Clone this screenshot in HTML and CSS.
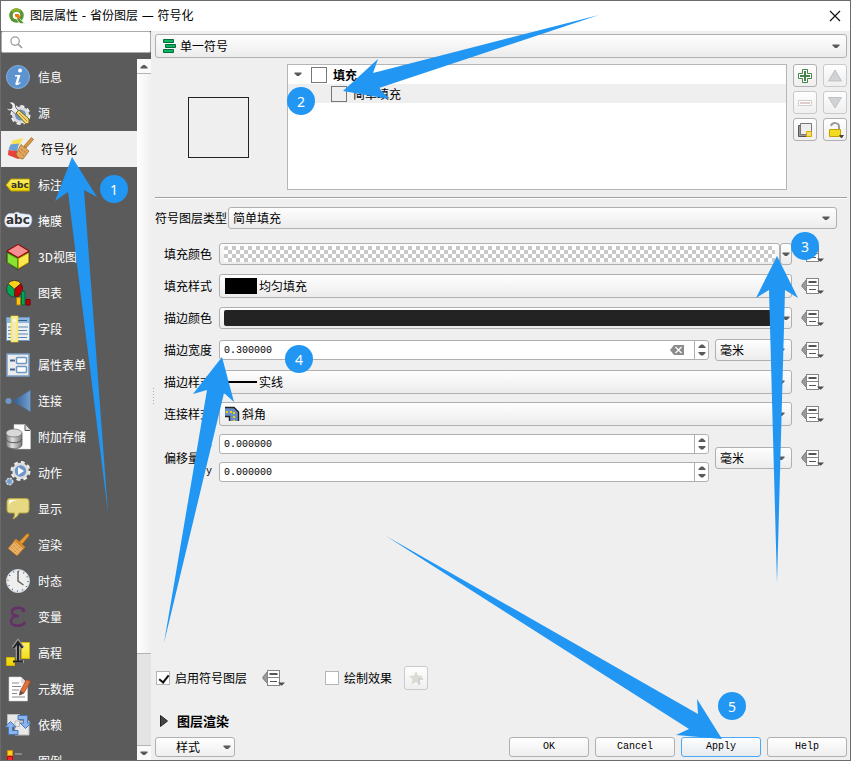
FILE: index.html
```html
<!DOCTYPE html>
<html lang="zh-CN">
<head>
<meta charset="utf-8">
<title>图层属性 - 省份图层 — 符号化</title>
<link rel="stylesheet" href="styles.css">
</head>
<body>
<svg class="defs" aria-hidden="true">
  <symbol id="caret" viewBox="0 0 8 5"><path d="M.5.500h7v1L5 4H3L.5 1.500z" fill="#5a5a5a"/></symbol>
  <symbol id="override" viewBox="0 0 24 18">
    <path d="M6 2v13L1 9.500V8z" fill="#999" stroke="#777"/>
    <rect x="5.500" y="1.500" width="12" height="15" fill="#fff" stroke="#858585"/>
    <path d="M5.500 8.500h12" stroke="#858585"/>
    <path d="M7.500 5h8" stroke="#555" stroke-width="2"/>
    <path d="M8 12.500h7" stroke="#555"/>
    <path d="M16 13.500h7l-3 3h-1z" fill="#4d4d4d"/>
  </symbol>
  <linearGradient id="grey" x1="0" x2="1"><stop offset="0" stop-color="#777"/><stop offset=".4" stop-color="#e0e0e0"/><stop offset="1" stop-color="#777"/></linearGradient>
  <linearGradient id="blue" x1="0" x2="1"><stop offset="0" stop-color="#2d5a90"/><stop offset="1" stop-color="#74a0cf"/></linearGradient>
  <linearGradient id="yellow" x1="0" x2="0" y1="0" y2="1"><stop offset="0" stop-color="#fdf06a"/><stop offset="1" stop-color="#edd400"/></linearGradient>
</svg>

<header class="titlebar">
  <svg class="logo" viewBox="0 0 16 16"><circle cx="7.500" cy="7.500" r="5.500" fill="none" stroke="#589632" stroke-width="3.500"/><path d="M3 3.500a6 6 0 0 1 8-.5" stroke="#93b023" stroke-width="2.500" fill="none"/><path d="M8 8l7.500 7.500h-4.200L8 12z" fill="#589632" stroke="#fff" stroke-width=".6"/><path d="M6 6h3.500L11 8v3L6 8.500z" fill="#ee7913"/></svg>
  <h1>图层属性 - 省份图层 — 符号化</h1>
  <button class="close" aria-label="关闭"><svg viewBox="0 0 12 12"><path d="M1 1l10 10M11 1L1 11" stroke="#111" stroke-width="1.200"/></svg></button>
</header>

<div class="window">
  <aside class="sidebar">
    <label class="search">
      <svg viewBox="0 0 14 14"><circle cx="5.500" cy="5.500" r="4.500" fill="none" stroke="#999" stroke-width="1.300"/><path d="M9 9l4 4" stroke="#999" stroke-width="1.600"/></svg>
      <input type="search" aria-label="搜索">
    </label>
    <div class="side-body">
      <nav class="pages">
        <button><svg viewBox="0 0 24 24"><circle cx="12" cy="12" r="11.500" fill="#5d93cf" stroke="#86aedb"/><circle cx="14" cy="5.500" r="2" fill="#fff"/><path d="M9 10h5.500l-2.500 8 2.500-1v1c-2 2.500-6 3-5 0l2-6.500H9z" fill="#fff"/></svg>信息</button>
        <button><svg viewBox="0 0 24 24"><circle cx="14.500" cy="14" r="7" fill="#6d94c5" stroke="#ddd" stroke-width="3"/><circle cx="14.500" cy="14" r="9" fill="none" stroke="#eee" stroke-width="2" stroke-dasharray="4 3"/><path d="M3 1.500C6 0 10 2 9.500 6l3 4-3 3-4-3.500C3 10.500 1 9 .5 6.500L3 8l3-1V4z" fill="#eee" stroke="#444" stroke-width=".7"/><path d="M10 12l3-3 10 9v4l-3 1z" fill="#efd874" stroke="#7a6418"/><path d="M13 12l8 8" stroke="#a98c30"/></svg>源</button>
        <button class="current" aria-current="page"><svg viewBox="0 0 24 24"><path d="M3 3.500l11-2.500-3 7-9 1z" fill="#f7e25a"/><path d="M1.500 7.500l8.500-1-2 8-8.500-2z" fill="#6b9fd8"/><path d="M-.5 13l8.500 1 5 6-4 2-10-4z" fill="#e7423b"/><path d="M15 9L22.500.5l2 2L17 11z" fill="#d9973e" stroke="#9a6420" stroke-width=".7"/><path d="M12 7.500l8 6.500-6 8c-3 0-6-2-7-5z" fill="#e0a45a" stroke="#9a6420" stroke-width=".7"/><path d="M10 14l5 5M12 12l5 4" stroke="#a66f2c" stroke-dasharray="1 1"/></svg>符号化</button>
        <button><svg viewBox="0 0 24 24"><path d="M0 12l5-6h18.500v12H5z" fill="url(#yellow)" stroke="#b59b00"/><text x="5" y="15" class="abc-small">abc</text></svg>标注</button>
        <button><svg viewBox="0 0 24 24"><path d="M3 4.500h5a4 4 0 0 1 6 0l9 1c4 1 4 10-1 12.500H2c-5-2-4-12 1-13.500z" fill="#eef2fc" stroke="#b8c4dc" stroke-width=".6"/><text x="0" y="15" class="abc-large">abc</text></svg>掩膜</button>
        <button><svg viewBox="0 0 24 26"><path d="M12 0l11.500 6.500v12L12 26 .5 18.500v-12z" fill="#333"/><path d="M12 .5l11 6.500-11 6.500L1 7z" fill="#f58f8f" stroke="#a40000"/><path d="M1.500 9l10 5.500v10l-10-6z" fill="#8ae234" stroke="#4e9a06"/><path d="M22.500 9l-10 5.500v10l10-6z" fill="#fce94f" stroke="#c4a000"/></svg>3D视图</button>
        <button><svg viewBox="0 0 24 26"><circle cx="8.500" cy="9" r="8" fill="#00a651" stroke="#222" stroke-width=".6"/><path d="M8.500 9L2 3.500a8.500 8.500 0 0 1 13 0z" fill="#fcd21c" stroke="#222" stroke-width=".6"/><path d="M8.500 9L15 3.500a9 9 0 0 1-5 13.500l-1.500-1z" fill="#c00000" stroke="#222" stroke-width=".6"/><path d="M10.500 17.500h4V25h-4z" fill="#fcc21c" stroke="#a87800"/><path d="M15.500 11.500h3.500V25h-3.500z" fill="#00a651" stroke="#064"/><path d="M20 19.500h4V25h-4z" fill="#c00000" stroke="#700"/></svg>图表</button>
        <button><svg viewBox="0 0 24 26"><rect x=".5" y="1.500" width="23" height="23" fill="#edf0f2" stroke="#6e97c4"/><path d="M1 2h22v5H1z" fill="#8db5de"/><path d="M12 4.500h9" stroke="#35618f"/><path d="M2 11h4M12 11h10M2 14.500h4M12 14.500h9M2 18h4M12 18h10M2 21.500h4M12 21.500h9" stroke="#5a84b0"/><rect x="5.500" y=".5" width="6" height="25" fill="#f2eabb" stroke="#fce94f" stroke-width="1.500"/><circle cx="8.500" cy="4.500" r="1.200" fill="#fff"/></svg>字段</button>
        <button><svg viewBox="0 0 24 24"><rect x="1" y="1" width="22" height="22" fill="#ececec" stroke="#7ba0cc" stroke-width="1.500"/><path d="M4 7.500h5M4 16.500h5" stroke="#44658c" stroke-width="2"/><rect x="10.500" y="4.500" width="10" height="6" rx="1" fill="#fff" stroke="#6e97c4" stroke-width="1.500"/><rect x="10.500" y="13.500" width="10" height="6" rx="1" fill="#fff" stroke="#6e97c4" stroke-width="1.500"/></svg>属性表单</button>
        <button><svg viewBox="0 0 24 24"><circle cx="2.500" cy="12" r="3" fill="#6e97c4"/><path d="M7 12L24.500 1v22z" fill="url(#blue)" stroke="#426c9c" stroke-width=".5"/></svg>连接</button>
        <button><svg viewBox="0 0 24 26"><path d="M8 .5h11l5.500 6V25H8z" fill="#fff" stroke="#ccc" stroke-width=".5"/><path d="M19 1v5.500h5" fill="#ddd" stroke="#555"/><path d="M0 9v12c1 5 15 5 16 0V9z" fill="url(#grey)" stroke="#555" stroke-width=".7"/><ellipse cx="8" cy="9" rx="8" ry="4" fill="#d8d8d8" stroke="#666" stroke-width=".7"/><path d="M0 15c1 5 15 5 16 0" fill="none" stroke="#555"/></svg>附加存储</button>
        <button><svg viewBox="0 0 24 26"><circle cx="14.500" cy="11" r="8.500" fill="none" stroke="#eee" stroke-width="3" stroke-dasharray="3.700 3"/><circle cx="14.500" cy="11" r="7" fill="#6d97ca" stroke="#ddd" stroke-width="2.500"/><path d="M12 7l6 4-6 4z" fill="#fff"/><circle cx="3.500" cy="21.500" r="3.200" fill="#729fcf" stroke="#ddd" stroke-width="1.500" stroke-dasharray="2 1"/></svg>动作</button>
        <button><svg viewBox="0 0 24 24"><path d="M4 1.500h16q3 0 3 3V13q0 3-3 3h-7q-1 4-6 6 2-3 1.500-6H4q-3 0-3-3V4.500q0-3 3-3z" fill="#e7d981" stroke="#b8a646"/><path d="M3 9q0-5 9-6H5Q3 3 3 5z" fill="#fff"/></svg>显示</button>
        <button><svg viewBox="0 0 24 24"><path d="M12 10l8.500-9L23 .5V3l-8 9.500z" fill="#e59b2f" stroke="#9a6420" stroke-width=".7"/><path d="M10 6l9 8-8 9L2 15.500z" fill="#edb165" stroke="#a46a1c" stroke-width=".8"/><path d="M10 6l9 8-1.500 2L8 7.500z" fill="#d58a24"/><path d="M5 14l7 7M7 12l7 7M9 10l6 6" stroke="#b97f35" stroke-dasharray="1 1"/></svg>渲染</button>
        <button><svg viewBox="0 0 24 24"><circle cx="12" cy="12" r="11.500" fill="#eeeeec" stroke="#d0d4d8"/><circle cx="12" cy="12" r="10" fill="none" stroke="#4c78aa" stroke-width="1.500" stroke-dasharray="1 4.240"/><path d="M12 2v10l5.500 4" fill="none" stroke="#666" stroke-width="1.500"/></svg>时态</button>
        <button><svg viewBox="0 0 24 24"><path d="M18 5.500C16 1.500 6 2 6 7c0 3 3 4 7 4-5 0-8 2-8 5 0 6 12 6 14 1" fill="none" stroke="#643068" stroke-width="2.600"/><circle cx="17.500" cy="5.500" r="1.800" fill="#643068"/></svg>变量</button>
        <button><svg viewBox="0 0 24 26"><path d="M15.500 2.500h8v16h-8zM.5 17.500h8v8h-8z" fill="url(#yellow)" stroke="#d4b400"/><path d="M9 21.500h9" stroke="#bbb" stroke-width="2"/><path d="M12 20.500V3M7.500 8L12 2l4.500 6" fill="none" stroke="#999" stroke-width="4.500"/><path d="M12 20.500V3M7.500 8L12 2l4.500 6M7 21.500h10" fill="none" stroke="#222" stroke-width="2"/></svg>高程</button>
        <button><svg viewBox="0 0 24 26"><path d="M3 1h12l6.500 6.500V25H3z" fill="#fff" stroke="#ccc" stroke-width=".6"/><path d="M15 1v6.500h6" fill="#ddd"/><path d="M6 7h7M6 10.500h9M6 14h7M6 17.500h5M6 21h13" stroke="#888"/><path d="M14.500 14.500l6-11 4 2-6.500 11.500-4.500 2z" fill="#e0703a" stroke="#a6461b" stroke-width=".7"/><path d="M14 14.500l4 2.500-4.500 2.500z" fill="#555"/></svg>元数据</button>
        <button><svg viewBox="0 0 24 24"><path d="M1.500 1.500h12v12h-12zM9 8h14v14H9z" fill="#e8e8e8" stroke="#bbb"/><path d="M12 2.500h9.500V10H25l-5.500 5.500L14 10h3.500V6.500H12z" fill="#8db4ea" stroke="#4478bc"/><path d="M12 21.500H2.500V14H-1l5.500-5.500L10 14H6.500v3.500H12z" fill="#8db4ea" stroke="#4478bc"/></svg>依赖</button>
        <button><svg viewBox="0 0 24 24"><path d="M1.500 1.500h5v5h-5z" fill="#fcd21c" stroke="#e08a00"/><path d="M1.500 7.500h5v5h-5z" fill="#ef2929" stroke="#c00"/><path d="M1.500 14.500h5v5h-5z" fill="#fcaf3e"/><path d="M9 5h7M9 15h7" stroke="#888" stroke-width="2"/></svg>图例</button>
      </nav>
      <div class="scrollbar" aria-hidden="true">
        <span class="step"><svg viewBox="0 0 8 5"><path d="M.5 4.500h7v-1L5 1H3L.5 3.500z" fill="#5a5a5a"/></svg></span>
        <span class="thumb"></span>
        <span class="trough"></span>
        <span class="step"><svg viewBox="0 0 8 5"><use href="#caret"/></svg></span>
      </div>
    </div>
  </aside>

  <main class="panel">
    <i class="grip"></i>
    <div class="combo tall">
      <svg class="i16" viewBox="0 0 16 16"><path d="M1.500 1.500h10v3h-10zM3.500 6.500h10v3h-10zM1.500 11.500h10v3h-10z" fill="#0db561" stroke="#076b3c"/></svg>
      <select aria-label="渲染器"><option>单一符号</option></select>
      <svg class="caret"><use href="#caret"/></svg>
    </div>

    <section class="symbol">
      <div class="preview"><span></span></div>
      <ul class="tree">
        <li><svg class="caret"><use href="#caret"/></svg><span class="box"></span><b>填充</b></li>
        <li class="child"><span class="box"></span>简单填充</li>
      </ul>
      <div class="tools">
        <button aria-label="添加"><svg viewBox="0 0 16 16"><path d="M5.500 1.500h5v4h4v5h-4v4h-5v-4h-4v-5h4z" fill="#fff" stroke="#43834a"/><path d="M8 3v10M3 8h10" stroke="#43834a" stroke-width="2"/></svg></button>
        <button aria-label="上移" disabled><svg viewBox="0 0 16 16"><path d="M8 2l6.500 11h-13z" fill="#d0d2d4" stroke="#bfc2c5"/></svg></button>
        <button aria-label="删除" disabled><svg viewBox="0 0 16 16"><path d="M1.500 5.500h13v5h-13z" fill="#fff" stroke="#d4cccc"/><path d="M3 8h10" stroke="#dfcccc" stroke-width="2"/></svg></button>
        <button aria-label="下移" disabled><svg viewBox="0 0 16 16"><path d="M8 13L1.500 2.500h13z" fill="#d0d2d4" stroke="#bfc2c5"/></svg></button>
        <button aria-label="复制"><svg viewBox="0 0 16 16"><path d="M1.500 3.500h10v11h-10z" fill="#9a9a92" stroke="#555"/><path d="M3.500 1.500h11v11h-11z" fill="#eeeeec" stroke="#777"/><path d="M9.500 9.500h5v5h-5z" fill="#f6dc70" stroke="#d4aa00"/></svg></button>
        <button aria-label="锁定颜色"><svg viewBox="0 0 16 16"><path d="M4 4c1-4 8-4 8 1v3" fill="none" stroke="#999" stroke-width="2"/><path d="M2.500 7.500h11v7h-11z" fill="#f2dc22" stroke="#c4a000"/><path d="M12 13h5l-2 3h-1z" fill="#444"/></svg></button>
      </div>
    </section>

    <hr>

    <div class="type-row">
      <label for="layer-type">符号图层类型</label>
      <div class="combo">
        <select id="layer-type"><option>简单填充</option></select>
        <svg class="caret"><use href="#caret"/></svg>
      </div>
    </div>

    <form class="props">
      <div class="row">
        <label for="fill-color">填充颜色</label>
        <div class="color"><button type="button" id="fill-color"><span class="checker"></span></button><button type="button" class="drop" aria-label="填充颜色选项"><svg class="caret"><use href="#caret"/></svg></button></div>
        <button type="button" class="override" aria-label="数据定义覆盖"><svg><use href="#override"/></svg></button>
      </div>
      <div class="row">
        <label for="fill-style">填充样式</label>
        <div class="combo tall"><span class="solid"></span><select id="fill-style"><option>均匀填充</option></select><svg class="caret"><use href="#caret"/></svg></div>
        <button type="button" class="override" aria-label="数据定义覆盖"><svg><use href="#override"/></svg></button>
      </div>
      <div class="row">
        <label for="line-color">描边颜色</label>
        <div class="color"><button type="button" id="line-color"><span class="ink"></span></button><button type="button" class="drop" aria-label="描边颜色选项"><svg class="caret"><use href="#caret"/></svg></button></div>
        <button type="button" class="override" aria-label="数据定义覆盖"><svg><use href="#override"/></svg></button>
      </div>
      <div class="row">
        <label for="line-width">描边宽度</label>
        <div class="pair">
          <div class="spin"><input id="line-width" type="text" value="0.300000"><svg class="clear" viewBox="0 0 14 10"><path d="M4 0h10v10H4L0 5z" fill="#8c8c8c"/><path d="M5.500 2l6 6M11.500 2l-6 6" stroke="#fff" stroke-width="1.200"/></svg><span class="steps"><svg viewBox="0 0 8 12"><path d="M.5 4h7v-1L5 .5H3L.5 3zM.5 8h7v1L5 11.500H3L.5 9z" fill="#5a5a5a"/></svg></span></div>
          <div class="combo unit"><select aria-label="宽度单位"><option>毫米</option></select><svg class="caret"><use href="#caret"/></svg></div>
        </div>
        <button type="button" class="override" aria-label="数据定义覆盖"><svg><use href="#override"/></svg></button>
      </div>
      <div class="row">
        <label for="line-style">描边样式</label>
        <div class="combo tall"><span class="line"></span><select id="line-style"><option>实线</option></select><svg class="caret"><use href="#caret"/></svg></div>
        <button type="button" class="override" aria-label="数据定义覆盖"><svg><use href="#override"/></svg></button>
      </div>
      <div class="row">
        <label for="join-style">连接样式</label>
        <div class="combo tall"><svg class="i16" viewBox="0 0 16 16"><path d="M1 1h9l5 5v9H6V10H1z" fill="#6a8fc4"/><path d="M1 1.500h9l4.500 4.500v9M1 10.500h4.500V15" fill="none" stroke="#222" stroke-width="1.400"/><path d="M2 6h8v9" fill="none" stroke="#edd400" stroke-width="2" stroke-dasharray="2 2"/></svg><select id="join-style"><option>斜角</option></select><svg class="caret"><use href="#caret"/></svg></div>
        <button type="button" class="override" aria-label="数据定义覆盖"><svg><use href="#override"/></svg></button>
      </div>
      <div class="row offset">
        <div class="offset-label"><span>偏移量</span><span class="axes mono"><label for="off-x">x</label><label for="off-y">y</label></span></div>
        <div class="pair">
          <div class="stack">
            <div class="spin"><input id="off-x" type="text" value="0.000000"><span class="steps"><svg viewBox="0 0 8 12"><path d="M.5 4h7v-1L5 .5H3L.5 3zM.5 8h7v1L5 11.500H3L.5 9z" fill="#5a5a5a"/></svg></span></div>
            <div class="spin"><input id="off-y" type="text" value="0.000000"><span class="steps"><svg viewBox="0 0 8 12"><path d="M.5 4h7v-1L5 .5H3L.5 3zM.5 8h7v1L5 11.500H3L.5 9z" fill="#5a5a5a"/></svg></span></div>
          </div>
          <div class="combo unit"><select aria-label="偏移单位"><option>毫米</option></select><svg class="caret"><use href="#caret"/></svg></div>
        </div>
        <button type="button" class="override" aria-label="数据定义覆盖"><svg><use href="#override"/></svg></button>
      </div>
    </form>

    <div class="toggles">
      <label><input type="checkbox" checked>启用符号图层</label>
      <button class="override" aria-label="数据定义覆盖"><svg><use href="#override"/></svg></button>
      <label class="effects"><input type="checkbox">绘制效果</label>
      <button class="star" aria-label="自定义效果" disabled><svg viewBox="0 0 16 16"><path d="M8 1l2 4.500 5 .5-3.500 3.500 1 5L8 12l-4.500 2.500 1-5L1 6l5-.5z" fill="#dcdbd2"/><path d="M11 15V9h4" fill="none" stroke="#ccc" stroke-width="1.500"/></svg></button>
    </div>

    <button class="group"><svg viewBox="0 0 8 12"><path d="M.5.500v11L7.500 6z" fill="#444" stroke="#222"/></svg>图层渲染</button>

    <footer class="actions">
      <button class="style">样式<svg class="caret"><use href="#caret"/></svg></button>
      <span class="grow"></span>
      <button class="mono">OK</button>
      <button class="mono">Cancel</button>
      <button class="mono default">Apply</button>
      <button class="mono">Help</button>
    </footer>
  </main>
</div>

<svg class="arrows" aria-hidden="true">
  <path d="M72 157L97 197 84 190 108 513 68 192 55 201z"/>
  <path d="M343 91L378 59 373 73 599 15 379 88 389 99z"/>
  <path d="M777 256L798 298 785 290 777 583 769 290 756 298z"/>
  <path d="M222 357L234 402 224 393 164 643 207 390 193 394z"/>
  <path d="M722 739L697 699 698 714 386 536 689 729 676 735z"/>
</svg>
<span class="badge b1">1</span>
<span class="badge b2">2</span>
<span class="badge b3">3</span>
<span class="badge b4">4</span>
<span class="badge b5">5</span>
</body>
</html>
```

FILE: styles.css
```css
* { box-sizing: border-box; }

body {
  position: relative;
  margin: 0;
  height: 100vh;
  display: flex;
  flex-direction: column;
  border: 1px solid #6b6b6b;
  background: #efefef;
  color: #000;
  font: 12px/16px "Noto Sans CJK SC", sans-serif;
  overflow: hidden;
}

button, input, select { font: inherit; color: inherit; margin: 0; }
button { padding: 0; border: 0; background: none; }
svg { display: block; flex: none; }
.defs { position: absolute; width: 0; height: 0; }
.mono { font-family: "Liberation Mono", monospace; font-size: 10px; }
.caret { width: 8px; height: 5px; }
.i16 { width: 16px; height: 16px; }

/* title bar */
.titlebar {
  flex: none;
  height: 30px;
  display: flex;
  align-items: center;
  gap: 5px;
  padding: 0 9px 0 8px;
  background: #fff;
}
.titlebar h1 {
  flex: 1;
  margin: 0;
  font-family: "DejaVu Sans", "Noto Sans CJK SC", sans-serif;
  font-size: 12px;
  font-weight: 400;
}
.logo { width: 16px; height: 16px; }
.close svg { width: 12px; height: 12px; }

.window { flex: 1; min-height: 0; display: flex; }

/* sidebar */
.sidebar {
  flex: none;
  width: 150px;
  display: flex;
  flex-direction: column;
  gap: 6px;
  background: #5b5b5b;
}
.search {
  display: flex;
  align-items: center;
  height: 22px;
  padding: 0 8px;
  gap: 4px;
  border: 1px solid #ababab;
  border-radius: 2px;
  background: #fff;
}
.search svg { width: 13px; height: 13px; }
.search input { flex: 1; min-width: 0; border: 0; padding: 0; outline: 0; background: none; }
.side-body { flex: 1; min-height: 0; display: flex; }
.pages { flex: 1; overflow: hidden; color: #fff; }
.pages button {
  display: flex;
  align-items: center;
  gap: 8px;
  width: 100%;
  height: 36px;
  padding-left: 5px;
}
.pages .current { padding-left: 8px; background: #efefef; color: #000; }
.pages svg { width: 24px; height: 26px; overflow: visible; }
.abc-small { font: bold 9px "DejaVu Sans", sans-serif; fill: #333; }
.abc-large { font: bold 12px "DejaVu Sans", sans-serif; fill: #333; }

.scrollbar { width: 14px; display: flex; flex-direction: column; background: #e4e4e4; }
.step { height: 14px; display: grid; place-items: center; background: #fafafa; }
.step svg { width: 8px; height: 5px; }
.thumb {
  flex: 582;
  border: solid #b5b5b5;
  border-width: 1px 0;
  background: linear-gradient(90deg, #fff, #f0f0f0);
}
.trough { flex: 92; border-bottom: 1px solid #b5b5b5; }

/* main panel */
.panel {
  position: relative;
  flex: 1;
  min-width: 0;
  display: flex;
  flex-direction: column;
  padding: 3px 3px 3px 4px;
}
.grip {
  position: absolute;
  left: 2px;
  top: 49%;
  width: 1px;
  height: 17px;
  background: repeating-linear-gradient(#aaa 0 1px, transparent 1px 3px);
}

.combo {
  flex: 1;
  min-width: 0;
  display: flex;
  align-items: center;
  height: 22px;
  padding: 0 6px 0 4px;
  border: 1px solid #b0b0b0;
  border-radius: 3px;
  background: linear-gradient(#fefefe, #ececec);
}
.combo.tall { height: 24px; }
.panel > .combo { flex: none; padding-left: 6px; }
.combo select {
  flex: 1;
  min-width: 0;
  height: 20px;
  padding: 0;
  border: 0;
  outline: 0;
  background: none;
  appearance: none;
}
.i16 + select { padding-left: 2px; }

.symbol { display: flex; gap: 6px; height: 126px; margin-top: 6px; }
.preview { width: 126px; display: grid; place-items: center; }
.preview span { width: 61px; height: 61px; border: 1px solid #232323; }
.tree {
  flex: 1;
  margin: 0;
  padding: 0;
  list-style: none;
  border: 1px solid #b5b5b5;
  background: #fff;
}
.tree li { display: flex; align-items: center; height: 19px; padding-left: 6px; }
.tree .caret { margin-right: 9px; }
.tree .child { padding-left: 43px; background: #efefef; }
.box { width: 16px; height: 16px; margin-right: 6px; border: 1px solid #777; background: #fff; }
.child .box { background: #efefef; }

.tools {
  display: grid;
  grid-template-columns: 24px 24px;
  grid-auto-rows: 23px;
  gap: 4px 6px;
  align-content: start;
}
.tools button, .star {
  display: grid;
  place-items: center;
  border: 1px solid #b0b0b0;
  border-radius: 3px;
  background: linear-gradient(#fefefe, #efefef);
}
.tools button:disabled, .star:disabled { border-color: #cacaca; }
.tools svg, .star svg { width: 16px; height: 16px; overflow: visible; }

hr {
  width: 100%;
  height: 2px;
  margin: 7px 0 8px;
  border: 0;
  border-top: 1px solid #a0a0a0;
  background: #fff;
}

.type-row { display: flex; align-items: center; padding-right: 10px; }
.type-row label { width: 73px; white-space: nowrap; }

.props { margin-top: 9px; padding: 0 22px 0 9px; }
.row {
  display: grid;
  grid-template-columns: 55px minmax(0, 1fr) 33px;
  align-items: center;
  height: 32px;
}
.row > .override { margin-left: 9px; }
.override svg { width: 24px; height: 18px; }

.color { display: flex; height: 22px; }
.color button {
  flex: 1;
  padding: 2px 4px;
  border: 1px solid #b0b0b0;
  border-radius: 3px;
  background: linear-gradient(#fefefe, #ececec);
}
.color .drop { flex: none; width: 12px; padding: 0 1px; display: grid; place-items: center; }
.color span { display: block; height: 16px; border-radius: 2px; }
.checker { background: repeating-conic-gradient(#fff 0 25%, #c8c8c8 0 50%) 0 0 / 8px 8px; }
.ink { background: #232323; }
.solid { width: 32px; height: 16px; margin: 0 2px 0 1px; background: #000; }
.line { width: 32px; height: 2px; margin: 0 2px 0 1px; background: #000; }

.pair { display: flex; align-items: center; gap: 6px; }
.spin {
  flex: 1;
  min-width: 0;
  display: flex;
  align-items: center;
  height: 20px;
  border: 1px solid #b0b0b0;
  border-radius: 3px;
  background: #fff;
}
.spin input {
  flex: 1;
  min-width: 0;
  height: 18px;
  padding: 0 0 0 4px;
  border: 0;
  outline: 0;
  background: none;
  font-family: "Liberation Mono", monospace;
  font-size: 10px;
}
.clear { width: 14px; height: 10px; margin-right: 10px; }
.steps {
  width: 14px;
  align-self: stretch;
  display: grid;
  place-items: center;
  border-left: 1px solid #b0b0b0;
}
.steps svg { width: 8px; height: 12px; }
.unit { flex: none; width: 77px; }

.offset { height: 56px; }
.offset-label { display: flex; align-items: center; gap: 6px; }
.axes { display: grid; grid-template-rows: 28px 28px; align-items: center; }
.stack { flex: 1; display: grid; gap: 8px; }

.toggles { display: flex; align-items: center; height: 24px; margin-top: auto; padding-left: 1px; }
.toggles label { display: flex; align-items: center; gap: 5px; }
.toggles .override { margin-left: 15px; }
.toggles .effects { margin-left: 39px; }
.toggles input {
  appearance: none;
  width: 14px;
  height: 14px;
  border: 1px solid #b5b5b5;
  background: #fff;
}
.toggles input:checked::before {
  content: "";
  display: block;
  width: 4px;
  height: 8px;
  margin: 1px 0 0 4px;
  border: solid #111;
  border-width: 0 2px 2px 0;
  transform: rotate(38deg);
}
.star { width: 24px; height: 24px; margin-left: 12px; }

.group {
  align-self: start;
  display: flex;
  align-items: center;
  gap: 9px;
  height: 20px;
  margin: 21px 0 6px;
  padding-left: 5px;
  font-size: 13px;
  font-weight: 700;
}
.group svg { width: 8px; height: 12px; }

.actions { display: flex; gap: 6px; }
.actions button {
  width: 80px;
  height: 20px;
  border: 1px solid #b0b0b0;
  border-radius: 3px;
  background: linear-gradient(#fefefe, #efefef);
}
.actions .style { display: flex; align-items: center; justify-content: space-between; padding: 0 3px 0 20px; }
.actions .default { border-color: #4aa8f5; background: linear-gradient(#fdfeff, #e6ebef); }
.grow { flex: 1; }

/* annotations over the dialog */
.arrows {
  position: absolute;
  inset: -1px;
  width: 851px;
  height: 761px;
  fill: #2196f3;
  pointer-events: none;
}
.badge {
  position: absolute;
  width: 28px;
  height: 28px;
  border-radius: 50%;
  background: #2196f3;
  color: #fff;
  font: 14px/29px "Noto Sans", sans-serif;
  text-align: center;
}
.b1 { left: 99px; top: 174px; }
.b2 { left: 286px; top: 86px; }
.b3 { left: 790px; top: 231px; }
.b4 { left: 284px; top: 344px; }
.b5 { left: 717px; top: 691px; }
```
